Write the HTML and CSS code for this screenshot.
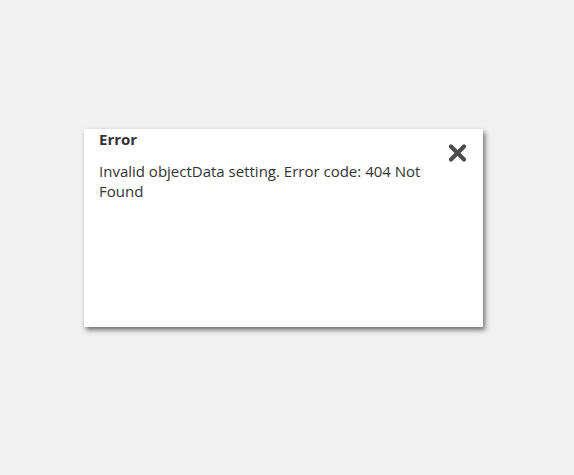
FILE: index.html
```html
<!DOCTYPE html>
<html>
<head>
<meta charset="utf-8">
<link rel="stylesheet" href="styles.css">
</head>
<body>
<div class="page">
  <div class="dialog">
    <div class="content">
      <div class="title">Error</div>
      <div class="message">Invalid objectData setting. Error code: 404 Not Found</div>
    </div>
    <button class="close" aria-label="Close">
      <svg width="19" height="18" viewBox="0 0 19 18"><path d="M3 2.5 L16 15.5 M16 2.5 L3 15.5" stroke="#4d4d4d" stroke-width="4.2" stroke-linecap="round" fill="none"/></svg>
    </button>
  </div>
</div>
</body>
</html>
```
FILE: styles.css
```css
html, body {
  margin: 0;
  padding: 0;
  background: #f1f1f1;
}
body {
  font-family: "Open Sans", "Liberation Sans", sans-serif;
  font-size: 15px;
  line-height: 20px;
  color: #333;
}
.page {
  min-height: 475px;
  box-sizing: border-box;
  padding: 129px 0 0 84px;
}
.dialog {
  width: 399px;
  height: 198px;
  box-sizing: border-box;
  background: #fff;
  box-shadow: 2px 3px 5px rgba(0, 0, 0, 0.55);
  display: flex;
  padding: 0 16px 0 15px;
}
.content {
  flex: 1;
  padding-right: 10px;
}
.title {
  font-weight: bold;
}
.message {
  margin-top: 12px;
}
.close {
  border: 0;
  background: none;
  padding: 0;
  margin-top: 15px;
  width: 19px;
  height: 18px;
  display: block;
  cursor: pointer;
}
.close svg {
  display: block;
}
```
